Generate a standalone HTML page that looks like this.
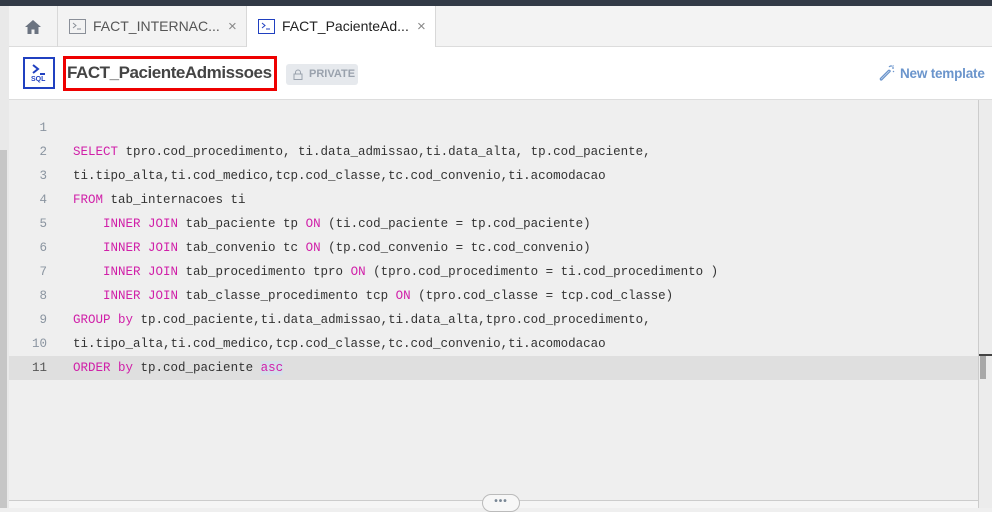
<!DOCTYPE html>
<html><head><style>
*{margin:0;padding:0;box-sizing:border-box}
body{width:992px;height:508px;overflow:hidden;background:#efefef;font-family:"Liberation Sans",sans-serif;position:relative}
.top{position:absolute;left:0;top:0;width:992px;height:6px;background:#323a46}
.lstrip{position:absolute;left:0;top:6px;width:9px;height:502px;background:#e9e9e9}
.lstrip2{position:absolute;left:0;top:150px;width:7px;height:358px;background:#c6c6c6}
.tabs{position:absolute;left:9px;top:6px;width:983px;height:41px;background:#f3f3f3;border-bottom:1px solid #dcdcdc}
.tab{position:absolute;top:0;height:41px;border-right:1px solid #d8d8d8;font-size:14px;color:#555;line-height:41px}
.hdr{position:absolute;left:9px;top:47px;width:983px;height:53px;background:#fff;border-bottom:1px solid #ddd}
.code{position:absolute;left:9px;top:100px;width:969px;height:400px;background:#efefef;font-family:"Liberation Mono",monospace;font-size:12.5px;color:#333}
.ln{position:absolute;left:0;width:38px;text-align:right;color:#8a94a0}
.ct{position:absolute;left:64px;white-space:pre}
.k{color:#d01fa8}
.row{position:absolute;left:0;width:969px;height:24px;line-height:24px}
</style></head><body>
<div class="top"></div>
<div class="lstrip"></div><div class="lstrip2"></div>
<div class="tabs">
 <div class="tab" style="left:0;width:49px;">
  <svg style="position:absolute;left:15px;top:13px" width="18" height="16" viewBox="0 0 18 16"><path d="M9 1L1 8h2.5v7h4v-4.5h3V15h4V8H17z" fill="#6b7380"/></svg>
 </div>
 <div class="tab" style="left:49px;width:189px;">
  <svg style="position:absolute;left:11px;top:13px" width="17" height="15"><rect x="0.5" y="0.5" width="16" height="14" fill="none" stroke="#8a8f98"/><path d="M4 4l3 2.5-3 2.5M8 10h4" stroke="#8a8f98" fill="none"/></svg>
  <span style="position:absolute;left:35px">FACT_INTERNAC...</span>
  <span style="position:absolute;left:170px;color:#888;font-size:15px">×</span>
 </div>
 <div class="tab" style="left:238px;width:189px;background:#fff;height:42px;color:#222">
  <svg style="position:absolute;left:11px;top:13px" width="17" height="15"><rect x="0.5" y="0.5" width="16" height="14" fill="none" stroke="#2040c0"/><path d="M4 4l3 2.5-3 2.5M8 10h4" stroke="#2040c0" fill="none"/></svg>
  <span style="position:absolute;left:35px">FACT_PacienteAd...</span>
  <span style="position:absolute;left:170px;color:#888;font-size:15px">×</span>
 </div>
</div>
<div class="hdr">
 <div style="position:absolute;left:14px;top:10px;width:32px;height:32px;border:2px solid #2040c0;background:#fff">
  <svg style="position:absolute;left:6px;top:4px" width="16" height="14"><path d="M2 2l5 4-5 4M9 11h5" stroke="#2040c0" stroke-width="2" fill="none"/></svg>
  <span style="position:absolute;left:6px;top:17px;font-size:7px;color:#2040c0;font-weight:bold">SQL</span>
 </div>
 <div style="position:absolute;left:54px;top:9px;width:214px;height:35px;border:3px solid #e00"></div>
 <div style="position:absolute;left:58px;top:16px;font-size:17px;font-weight:bold;color:#444;letter-spacing:-0.45px">FACT_PacienteAdmissoes</div>
 <div style="position:absolute;left:277px;top:17px;width:72px;height:21px;background:#e6e9ed;border-radius:3px;font-size:11px;font-weight:bold;color:#9aa2ad;line-height:21px;padding-left:23px">PRIVATE
  <svg style="position:absolute;left:7px;top:5px" width="10" height="11"><rect x="1" y="5" width="8" height="5.5" fill="none" stroke="#9aa2ad"/><path d="M2.5 5V3.5a2.5 2.5 0 0 1 5 0V5" fill="none" stroke="#9aa2ad"/></svg>
 </div>
 <svg style="position:absolute;left:869px;top:16px" width="18" height="18"><path d="M2 16L11 7M3.5 17L12.5 8M2 16l1.5 1.5M11 7l1.5 1" stroke="#6b95cc" stroke-width="1.3" fill="none"/><path d="M13 2v2M16 5h-2M15.5 2.5l-1 1M11 3l1 1M16 9l-1-1" stroke="#6b95cc" stroke-width="1.2"/></svg>
 <div style="position:absolute;left:891px;top:19px;font-size:13.5px;font-weight:bold;color:#6b95cc;letter-spacing:-0.2px">New template</div>
</div>
<div class="code">
 <div class="row" style="top:16px"><span class="ln">1</span></div>
 <div class="row" style="top:40px"><span class="ln">2</span><span class="ct"><span class="k">SELECT</span> tpro.cod_procedimento, ti.data_admissao,ti.data_alta, tp.cod_paciente,</span></div>
 <div class="row" style="top:64px"><span class="ln">3</span><span class="ct">ti.tipo_alta,ti.cod_medico,tcp.cod_classe,tc.cod_convenio,ti.acomodacao</span></div>
 <div class="row" style="top:88px"><span class="ln">4</span><span class="ct"><span class="k">FROM</span> tab_internacoes ti</span></div>
 <div class="row" style="top:112px"><span class="ln">5</span><span class="ct">    <span class="k">INNER JOIN</span> tab_paciente tp <span class="k">ON</span> (ti.cod_paciente = tp.cod_paciente)</span></div>
 <div class="row" style="top:136px"><span class="ln">6</span><span class="ct">    <span class="k">INNER JOIN</span> tab_convenio tc <span class="k">ON</span> (tp.cod_convenio = tc.cod_convenio)</span></div>
 <div class="row" style="top:160px"><span class="ln">7</span><span class="ct">    <span class="k">INNER JOIN</span> tab_procedimento tpro <span class="k">ON</span> (tpro.cod_procedimento = ti.cod_procedimento )</span></div>
 <div class="row" style="top:184px"><span class="ln">8</span><span class="ct">    <span class="k">INNER JOIN</span> tab_classe_procedimento tcp <span class="k">ON</span> (tpro.cod_classe = tcp.cod_classe)</span></div>
 <div class="row" style="top:208px"><span class="ln">9</span><span class="ct"><span class="k">GROUP</span> <span class="k">by</span> tp.cod_paciente,ti.data_admissao,ti.data_alta,tpro.cod_procedimento,</span></div>
 <div class="row" style="top:232px"><span class="ln">10</span><span class="ct">ti.tipo_alta,ti.cod_medico,tcp.cod_classe,tc.cod_convenio,ti.acomodacao</span></div>
 <div class="row" style="top:256px;background:#dfdfdf"><span class="ln" style="color:#555">11</span><span class="ct"><span class="k">ORDER</span> <span class="k">by</span> tp.cod_paciente <span class="k" style="background:#d6dfe9">asc</span></span></div>
</div>
<div style="position:absolute;left:978px;top:100px;width:1px;height:408px;background:#ccc"></div>
<div style="position:absolute;left:979px;top:100px;width:13px;height:408px;background:#ececec"></div>
<div style="position:absolute;left:979px;top:354px;width:13px;height:2px;background:#444"></div>
<div style="position:absolute;left:980px;top:356px;width:6px;height:23px;background:#a8a8a8"></div>
<div style="position:absolute;left:9px;top:500px;width:969px;height:1px;background:#ccc"></div>
<div style="position:absolute;left:9px;top:501px;width:969px;height:7px;background:#f5f5f5"></div>
<div style="position:absolute;left:482px;top:494px;width:38px;height:18px;border:1px solid #bbb;border-radius:9px;background:#f7f7f7;text-align:center;font-size:10px;line-height:14px;color:#7a8896;letter-spacing:1px;font-weight:bold">•••</div>
</body></html>
